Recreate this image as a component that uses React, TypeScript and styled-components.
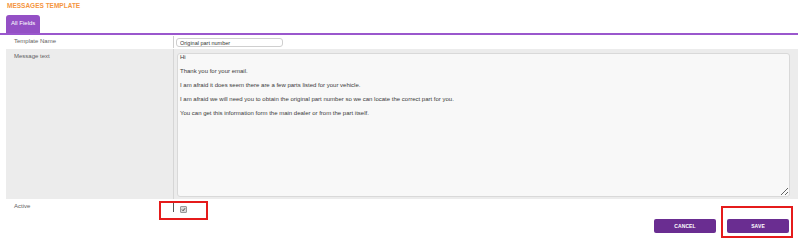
import { FC } from "react";
import styled, { createGlobalStyle } from "styled-components";

const GlobalStyle = createGlobalStyle`
  body {
    margin: 0;
    background: #fff;
    font-family: "Liberation Sans", Arial, sans-serif;
  }
`;

const MESSAGE = [
  "Hi",
  "",
  "Thank you for your email.",
  "",
  "I am afraid it does seem there are a few parts listed for your vehicle.",
  "",
  "I am afraid we will need you to obtain the original part number so we can locate the correct part for you.",
  "",
  "You can get this information form the main dealer or from the part itself.",
].join("\n");

const App: FC = () => {
  return (
    <Page>
      <GlobalStyle />
      <Title>MESSAGES TEMPLATE</Title>
      <TabBar>
        <Tab>All Fields</Tab>
      </TabBar>
      <Form>
        <Row>
          <Label top={3}>Template Name</Label>
          <Field line="#cfcfcf">
            <TextInput defaultValue="Original part number" />
          </Field>
        </Row>
        <Row shaded>
          <Label top={4}>Message text</Label>
          <Field line="#d6d6d6" tall>
            <MessageBox readOnly defaultValue={MESSAGE} />
          </Field>
        </Row>
        <Row>
          <Label top={4}>Active</Label>
          <Field line="#555" short>
            <CheckBox>
              <svg width="5" height="5" viewBox="0 0 10 10">
                <path d="M2 5.2 L4.2 7.4 L8 2.6" fill="none" stroke="#333" strokeWidth="1.8" />
              </svg>
            </CheckBox>
            <Highlight style={{ left: -15, top: 0, width: 49, height: 19 }} />
          </Field>
        </Row>
      </Form>
      <Footer>
        <Button>CANCEL</Button>
        <ButtonWrap>
          <Button>SAVE</Button>
          <Highlight style={{ left: -6, top: -13, width: 72, height: 32 }} />
        </ButtonWrap>
      </Footer>
    </Page>
  );
};

export default App;

const Page = styled.div`
  width: 798px;
  height: 250px;
  overflow: hidden;
`;

const Title = styled.h1`
  margin: 0;
  padding: 2px 0 0 7px;
  height: 11px;
  font-size: 6.5px;
  line-height: 8px;
  font-weight: bold;
  color: #f5963f;
`;

const TabBar = styled.div`
  display: flex;
  margin-top: 2px;
  padding-left: 6px;
  height: 18px;
  border-bottom: 2px solid #9a57cd;
`;

const Tab = styled.div`
  width: 34px;
  padding: 5px 0 0 5px;
  box-sizing: border-box;
  background: #9450c5;
  color: #fff;
  font-size: 6px;
  border-radius: 3px 3px 0 0;
`;

const Form = styled.div`
  margin-left: 6px;
`;

const Row = styled.div<{ shaded?: boolean }>`
  display: grid;
  grid-template-columns: 167px 1fr;
  background: ${(p) => (p.shaded ? "#ececec" : "transparent")};
`;

const Label = styled.div<{ top: number }>`
  padding: ${(p) => p.top}px 0 0 8px;
  font-size: 6px;
  line-height: 7px;
  color: #5f5f5f;
`;

const Field = styled.div<{ line: string; tall?: boolean; short?: boolean }>`
  position: relative;
  display: flex;
  align-items: flex-start;
  margin: ${(p) => (p.tall ? "0" : p.short ? "2px 0 3px" : "1px 0")};
  padding: ${(p) => (p.tall ? "4px 8px 2px 3px" : p.short ? "5px 0 0 6px" : "2px 0 2px 2px")};
  height: ${(p) => (p.tall ? "150px" : p.short ? "11px" : "12px")};
  box-sizing: border-box;
  border-left: 1px solid ${(p) => p.line};
`;

const TextInput = styled.input`
  width: 107px;
  height: 9px;
  box-sizing: border-box;
  padding: 0 3px;
  border: 1px solid #cfcfcf;
  border-radius: 3px;
  background: #fff;
  font-family: "Liberation Sans", Arial, sans-serif;
  font-size: 5.5px;
  color: #333;
  outline: none;
`;

const MessageBox = styled.textarea`
  flex: 1;
  height: 144px;
  box-sizing: border-box;
  margin: 0;
  padding: 0 2px;
  border: 1px solid #d9d9d9;
  border-radius: 3px;
  background: #f8f8f8;
  font-family: "Liberation Sans", Arial, sans-serif;
  font-size: 6px;
  line-height: 7px;
  color: #3a3a3a;
  outline: none;
  resize: both;
`;

const CheckBox = styled.span`
  display: flex;
  align-items: center;
  justify-content: center;
  width: 5px;
  height: 5px;
  background: #d8d8d8;
  border: 0.5px solid #999;
  border-radius: 1px;
`;

const Highlight = styled.div`
  position: absolute;
  box-sizing: border-box;
  border: 2px solid #e51b1b;
  pointer-events: none;
`;

const Footer = styled.div`
  display: flex;
  align-items: flex-start;
  justify-content: flex-end;
  gap: 11px;
  margin-top: 4px;
  padding-right: 9px;
`;

const ButtonWrap = styled.div`
  position: relative;
  display: flex;
`;

const Button = styled.button`
  display: block;
  width: 62px;
  height: 14px;
  padding: 0;
  border: none;
  border-radius: 2px;
  background: #6a2d91;
  color: #fff;
  font-family: "Liberation Sans", Arial, sans-serif;
  font-size: 5px;
  font-weight: bold;
  letter-spacing: 0.1px;
`;
